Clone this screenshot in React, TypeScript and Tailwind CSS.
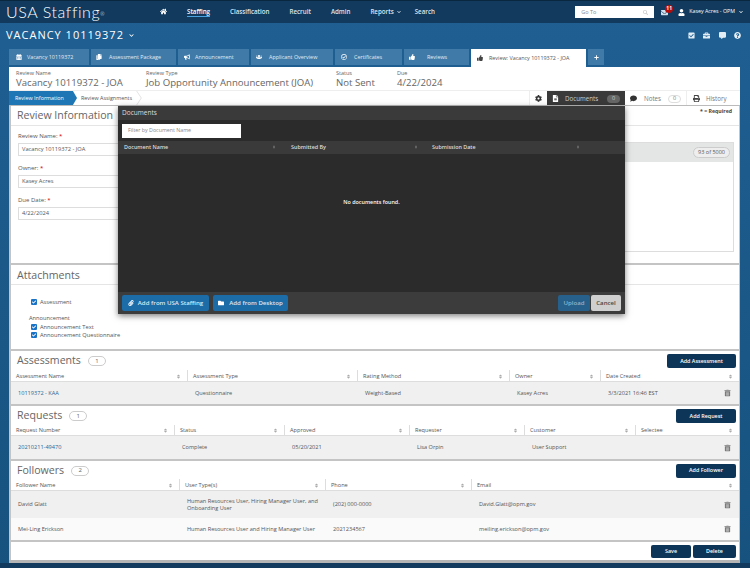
import React from 'react';
import {
  FaHome, FaChevronDown, FaSearch, FaEnvelope, FaUser, FaCheckSquare, FaBriefcase, FaCommentAlt,
  FaQuestionCircle, FaCalendarAlt, FaCopy, FaBullhorn, FaUsers, FaRegCheckCircle, FaThumbsUp, FaPlus,
  FaCog, FaFileAlt, FaComment, FaPrint, FaPaperclip, FaFolder, FaSort, FaTrashAlt, FaCheck,
} from 'react-icons/fa';

const tabs = [
  { label: 'Vacancy 10119372', icon: FaCalendarAlt, w: 'w-[80px] pl-[7px]', gap: 'mr-[5px]' },
  { label: 'Assessment Package', icon: FaCopy, w: 'w-[85px] pl-[5px]', gap: 'mr-[7px]' },
  { label: 'Announcement', icon: FaBullhorn, w: 'w-[71px] pl-[6px]', gap: 'mr-[5px]' },
  { label: 'Applicant Overview', icon: FaUsers, w: 'w-[82px] pl-[5px]', gap: 'mr-[7px]' },
  { label: 'Certificates', icon: FaRegCheckCircle, w: 'w-[67px] pl-[6px]', gap: 'mr-[7px]' },
  { label: 'Reviews', icon: FaThumbsUp, w: 'w-[65px] pl-[5px]', gap: 'mr-[12px]' },
];

const Badge = ({ n }: { n: number }) => (
  <span className="ml-[7px] inline-flex h-[10px] w-[18px] items-center justify-center rounded-full border border-[#ccc] bg-white text-[6px] text-[#666]">
    {n}
  </span>
);

const DarkButton = ({ label, className }: { label: string; className: string }) => (
  <button className={`flex items-center justify-center rounded-[2px] bg-[#0d3557] text-[5.4px] font-semibold text-white ${className}`}>
    {label}
  </button>
);

const Head = ({ label }: { label: string }) => (
  <div className="flex items-center justify-between border-r border-[#ddd] pl-[5px] pr-[6px] pt-[1px] last:border-r-0">
    <span>{label}</span>
    <FaSort className="text-[5px] text-[#aaa]" />
  </div>
);

const Trash = () => <FaTrashAlt className="absolute right-[8px] top-1/2 -translate-y-1/2 text-[7px] text-[#777]" />;

const Field = ({ label, value }: { label: string; value: string }) => (
  <div className="mb-[7px]">
    <div className="mb-[1px] h-[11px] text-[6px] leading-[11px] text-[#555]">
      {label} <span className="text-[#c00]">*</span>
    </div>
    <div className="flex h-[13px] items-center border border-[#ddd] bg-white pl-[3px] text-[5.7px] text-[#555]">{value}</div>
  </div>
);

const Check = ({ label }: { label: string }) => (
  <div className="flex h-[8.5px] items-center">
    <span className="mr-[3px] flex h-[6px] w-[6px] items-center justify-center rounded-[1px] bg-[#1a73c4]">
      <FaCheck className="text-[4px] text-white" />
    </span>
    {label}
  </div>
);

export default function App() {
  return (
    <div className="relative h-[568px] w-[750px] overflow-hidden bg-gradient-to-b from-[#1f5f92] to-[#17527f] font-['Open_Sans',sans-serif] text-[#555]">
      {/* top nav */}
      <header className="flex h-[23px] items-center border-t border-[#0a2740] bg-[#123a5e] pl-[6px] pr-[7px] text-white">
        <div className="w-[154px] font-['Lato',sans-serif] text-[16px] font-light tracking-[0.6px]">
          USA Staffing<sup className="text-[5px]">®</sup>
        </div>
        <nav className="flex items-center text-[6.2px] font-semibold text-[#dbe6ef]">
          <FaHome className="mr-[20px] text-[7px] text-white" />
          <span className="mr-[20px] border-b border-[#4aa3e0] text-white">Staffing</span>
          <span className="mr-[20px]">Classification</span>
          <span className="mr-[20px]">Recruit</span>
          <span className="mr-[20px]">Admin</span>
          <span className="mr-[14px] flex items-center">Reports <FaChevronDown className="ml-[3px] text-[4px]" /></span>
          <span>Search</span>
        </nav>
        <div className="ml-auto flex h-[12px] w-[79px] items-center justify-between bg-white px-[6px] text-[5.5px] text-[#888]">
          Go To <FaSearch className="text-[5px] text-[#ccc]" />
        </div>
        <div className="relative ml-[7px] mr-[7px]">
          <FaEnvelope className="text-[7px] text-[#cfe0ee]" />
          <span className="absolute -top-[4px] left-[4px] flex h-[8px] w-[8px] items-center justify-center rounded-full bg-[#b30d0d] text-[5px] font-bold">11</span>
        </div>
        <FaUser className="ml-[3px] mr-[4px] text-[7px]" />
        <span className="text-[5.3px]">Kasey Acres - OPM</span>
        <FaChevronDown className="ml-[4px] text-[4px]" />
      </header>

      {/* vacancy bar */}
      <div className="flex h-[25px] items-center pl-[6px] pr-[9px] text-white">
        <span className="text-[11px] tracking-[1px]">VACANCY 10119372</span>
        <FaChevronDown className="ml-[5px] text-[5px]" />
        <div className="ml-auto flex items-center gap-[8.5px] text-[7px] text-[#e3edf5]">
          <FaCheckSquare />
          <FaBriefcase />
          <FaCommentAlt />
          <FaQuestionCircle />
        </div>
      </div>

      {/* tabs */}
      <div className="flex h-[19px] items-start gap-[2px] pl-[9px] pt-[1px]">
        {tabs.map(t => (
          <div key={t.label} className={`flex h-[16px] items-center bg-[#3f7aa8] text-[5.4px] text-[#e4edf4] ${t.w}`}>
            <t.icon className={`text-[6px] text-white ${t.gap}`} />
            {t.label}
          </div>
        ))}
        <div className="flex h-[18px] w-[115px] items-center bg-white pl-[6px] text-[5.4px] text-[#555]">
          <FaThumbsUp className="mr-[6px] text-[6px] text-[#444]" />
          Review: Vacancy 10119372 - JOA
        </div>
        <div className="flex h-[16px] w-[16px] items-center justify-center bg-[#3f7aa8]">
          <FaPlus className="text-[5px] text-white" />
        </div>
      </div>

      {/* main panel */}
      <main className="ml-[9px] mr-[10px] flex h-[496px] flex-col bg-white">
        <div className="flex h-[24px] items-center border-b border-[#eee] pl-[7px] text-[#666]">
          <div className="w-[130px]">
            <div className="text-[5.5px] leading-[7px]">Review Name</div>
            <div className="text-[9.6px] leading-[11px]">Vacancy 10119372 - JOA</div>
          </div>
          <div className="w-[190px]">
            <div className="text-[5.5px] leading-[7px]">Review Type</div>
            <div className="text-[9.6px] leading-[11px]">Job Opportunity Announcement (JOA)</div>
          </div>
          <div className="w-[61px]">
            <div className="text-[5.5px] leading-[7px]">Status</div>
            <div className="text-[9.6px] leading-[11px]">Not Sent</div>
          </div>
          <div>
            <div className="text-[5.5px] leading-[7px]">Due</div>
            <div className="text-[9.6px] leading-[11px]">4/22/2024</div>
          </div>
        </div>

        {/* stepper and side tabs */}
        <div className="flex h-[15px] shrink-0 items-stretch border-b border-[#bbb]">
          <div className="flex w-[68px] items-center bg-[#1f76b4] pl-[6px] pt-[1px] text-[5.4px] text-white [clip-path:polygon(0_0,94%_0,100%_50%,94%_100%,0_100%)]">
            Review Information
          </div>
          <div className="flex items-center pl-[4px] pt-[1px] text-[5.4px]">Review Assignments</div>
          <svg viewBox="0 0 6 15" className="ml-[4px] h-[14px] w-[6px] text-[#ccc]" fill="none" stroke="currentColor" strokeWidth="0.6">
            <path d="M0.5 0L5.5 7.5L0.5 15" />
          </svg>
          <div className="ml-auto flex w-[18px] items-center justify-center border-l border-[#eee] pt-[1px] text-[7px] text-[#333]">
            <FaCog />
          </div>
          <div className="flex w-[78px] items-center bg-[#3a3a3a] pl-[5px] pt-[1px] text-[6.2px] text-[#ccc]">
            <FaFileAlt className="mr-[6px] text-[7px] text-white" />
            Documents
            <span className="ml-[9px] flex h-[8px] w-[13px] items-center justify-center rounded-full bg-[#666] text-[5.5px]">0</span>
          </div>
          <div className="flex w-[62px] items-center border-r border-[#eee] pl-[5px] pt-[1px] text-[6.2px] text-[#777]">
            <FaComment className="mr-[7px] text-[7px] text-[#333]" />
            Notes
            <span className="ml-[7px] flex h-[8px] w-[13px] items-center justify-center rounded-full border border-[#ddd] text-[5.5px]">0</span>
          </div>
          <div className="flex w-[53px] items-center pl-[6px] pt-[1px] text-[6.2px] text-[#777]">
            <FaPrint className="mr-[6px] text-[7px] text-[#444]" />
            History
          </div>
        </div>

        {/* review information */}
        <section className="h-[159px] shrink-0 border-x border-l-2 border-b-2 border-[#c4c4c4]">
          <div className="flex h-[20px] items-center justify-between border-b border-[#e5e5e5] pl-[6px] pr-[7px] pt-[1px]">
            <span className="text-[10.6px] text-[#666]">Review Information</span>
            <span className="-mt-[9px] text-[5.2px] font-bold text-[#444]">* = Required</span>
          </div>
          <div className="flex pl-[7px] pr-[5px] pt-[5px]">
            <div className="w-[150px]">
              <Field label="Review Name:" value="Vacancy 10119372 - JOA" />
              <Field label="Owner:" value="Kasey Acres" />
              <Field label="Due Date:" value="4/22/2024" />
            </div>
            <div className="ml-[20px] mt-[11px] h-[110px] flex-1 border border-[#ddd]">
              <div className="flex h-[19px] items-center justify-end bg-[#e4e6e5] pr-[3px]">
                <span className="rounded-full border border-[#ccc] bg-[#eee] px-[4px] text-[5.5px] leading-[9px]">93 of 5000</span>
              </div>
            </div>
          </div>
        </section>

        {/* attachments */}
        <section className="h-[86px] shrink-0 border-x border-l-2 border-b-2 border-[#c4c4c4]">
          <div className="flex h-[20px] items-center border-b border-[#e5e5e5] pl-[6px] pt-[2px] text-[10.6px] text-[#666]">Attachments</div>
          <div className="pl-[20px] pt-[13px] text-[5.7px] leading-[8.5px]">
            <Check label="Assessment" />
            <div className="-ml-[2px] mt-[7.5px]">Announcement</div>
            <Check label="Announcement Text" />
            <Check label="Announcement Questionnaire" />
          </div>
        </section>

        {/* assessments */}
        <section className="h-[55px] shrink-0 border-x border-l-2 border-b-2 border-[#c4c4c4]">
          <div className="flex h-[19px] items-center pl-[6px] pr-[3px] pt-[1px]">
            <span className="text-[10.6px] text-[#666]">Assessments</span>
            <Badge n={1} />
            <DarkButton label="Add Assessment" className="ml-auto h-[14px] w-[69px]" />
          </div>
          <div className="grid h-[12px] grid-cols-[177px_170px_152px_91px_1fr] items-stretch border-b border-[#ddd] text-[5.6px]">
            <Head label="Assessment Name" /><Head label="Assessment Type" /><Head label="Rating Method" /><Head label="Owner" /><Head label="Date Created" />
          </div>
          <div className="relative grid h-[22px] grid-cols-[177px_170px_152px_91px_1fr] items-center bg-[#f0f0f0] pl-[7px] text-[5.6px]">
            <span className="text-[#2b6797]">10119372 - KAA</span>
            <span>Questionnaire</span>
            <span>Weight-Based</span>
            <span>Kasey Acres</span>
            <span>3/3/2021 16:46 EST</span>
            <Trash />
          </div>
        </section>

        {/* requests */}
        <section className="h-[55px] shrink-0 border-x border-l-2 border-b-2 border-[#c4c4c4]">
          <div className="flex h-[19px] items-center pl-[6px] pr-[3px] pt-[1px]">
            <span className="text-[10.6px] text-[#666]">Requests</span>
            <Badge n={1} />
            <DarkButton label="Add Request" className="ml-auto h-[14px] w-[60px]" />
          </div>
          <div className="grid h-[11px] grid-cols-[164px_110px_125px_115px_111px_1fr] items-stretch border-b border-[#ddd] text-[5.6px]">
            <Head label="Request Number" /><Head label="Status" /><Head label="Approved" /><Head label="Requester" /><Head label="Customer" /><Head label="Selectee" />
          </div>
          <div className="relative grid h-[23px] grid-cols-[164px_110px_125px_115px_111px_1fr] items-center bg-[#f0f0f0] pl-[7px] text-[5.6px]">
            <span className="text-[#2b6797]">20210211-49470</span>
            <span>Complete</span>
            <span>05/20/2021</span>
            <span>Lisa Orpin</span>
            <span>User Support</span>
            <span></span>
            <Trash />
          </div>
        </section>

        {/* followers */}
        <section className="h-[81px] shrink-0 border-x border-l-2 border-b-2 border-[#c4c4c4]">
          <div className="flex h-[18px] items-center pl-[6px] pr-[3px] pt-[1px]">
            <span className="text-[10.6px] text-[#666]">Followers</span>
            <Badge n={2} />
            <DarkButton label="Add Follower" className="ml-auto h-[14px] w-[60px]" />
          </div>
          <div className="grid h-[12px] grid-cols-[169px_146px_146px_1fr] items-stretch border-b border-[#ddd] text-[5.6px]">
            <Head label="Follower Name" /><Head label="User Type(s)" /><Head label="Phone" /><Head label="Email" />
          </div>
          <div className="relative grid h-[27px] grid-cols-[169px_146px_146px_1fr] items-center bg-[#f0f0f0] pl-[7px] text-[5.6px] leading-[7px]">
            <span>David Glatt</span>
            <span>Human Resources User, Hiring Manager User, and Onboarding User</span>
            <span>(202) 000-0000</span>
            <span>David.Glatt@opm.gov</span>
            <Trash />
          </div>
          <div className="relative grid h-[22px] grid-cols-[169px_146px_146px_1fr] items-center bg-[#fafafa] pl-[7px] text-[5.6px]">
            <span>Mei-Ling Erickson</span>
            <span>Human Resources User and Hiring Manager User</span>
            <span>2021234567</span>
            <span>meiling.erickson@opm.gov</span>
            <Trash />
          </div>
        </section>

        <div className="flex h-[18px] shrink-0 items-center justify-end gap-[2px] border-x border-l-2 border-[#c4c4c4] pr-[3px]">
          <DarkButton label="Save" className="h-[13px] w-[40px]" />
          <DarkButton label="Delete" className="h-[13px] w-[43px]" />
        </div>
        <div className="h-[3px] shrink-0 bg-[#b5b5b5]"></div>
      </main>
      <div className="h-[5px] bg-[#123a5e]"></div>

      {/* documents dialog */}
      <div className="absolute left-[118px] top-[106px] flex h-[208px] w-[507px] flex-col bg-[#2b2b2b] text-[#ddd] shadow-[0_2px_6px_rgba(0,0,0,0.5)]">
        <div className="flex h-[14px] items-center bg-[#3a3a3a] pl-[4px] text-[6.5px]">Documents</div>
        <div className="flex h-[21px] items-center pl-[4px]">
          <div className="flex h-[14px] w-[119px] items-center bg-white pl-[6px] text-[5.3px] text-[#888]">Filter by Document Name</div>
        </div>
        <div className="grid h-[13px] grid-cols-[159px_141px_1fr] items-center bg-[#3a3a3a] text-[5.4px] font-semibold">
          <div className="flex items-center justify-between pl-[6px] pr-[1px]">Document Name <FaSort className="text-[4px] text-[#777]" /></div>
          <div className="pl-[14px]"><span className="flex items-center justify-between">Submitted By <FaSort className="text-[4px] text-[#777]" /></span></div>
          <div className="pl-[14px] pr-[45px]"><span className="flex items-center justify-between">Submission Date <FaSort className="text-[4px] text-[#777]" /></span></div>
        </div>
        <div className="flex flex-1 items-center justify-center pb-[42px] text-[5.4px] font-semibold text-white">No documents found.</div>
        <div className="flex h-[22px] items-center bg-[#3c3c3c] px-[4px] text-[6.1px]">
          <button className="mr-[4px] flex h-[16px] w-[87px] items-center justify-center rounded-[2px] bg-[#1c6ca8] font-semibold text-[#dbe8f2]">
            <FaPaperclip className="mr-[4px] text-[6px] text-white" /> Add from USA Staffing
          </button>
          <button className="flex h-[16px] w-[75px] items-center justify-center rounded-[2px] bg-[#1c6ca8] font-semibold text-[#dbe8f2]">
            <FaFolder className="mr-[5px] text-[6px] text-white" /> Add from Desktop
          </button>
          <button className="ml-auto mr-[1px] flex h-[16px] w-[32px] items-center justify-center rounded-[2px] bg-[#27608a] font-semibold text-[#8fb3cc]">Upload</button>
          <button className="flex h-[16px] w-[30px] items-center justify-center rounded-[2px] bg-[#cfcfcf] font-semibold text-[#444]">Cancel</button>
        </div>
      </div>
    </div>
  );
}
